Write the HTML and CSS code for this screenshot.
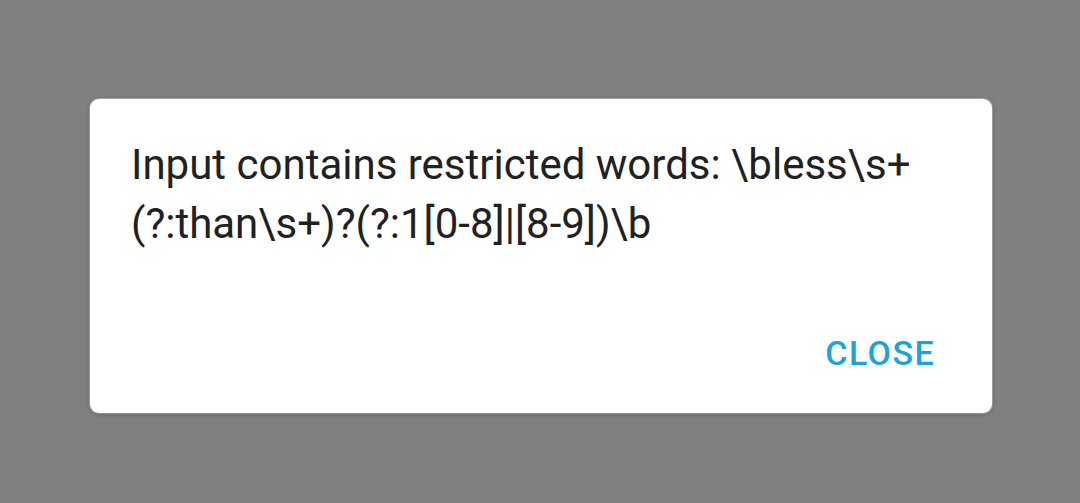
FILE: index.html
```html
<!DOCTYPE html>
<html>
<head>
<meta charset="utf-8">
<link rel="stylesheet" href="styles.css">
</head>
<body>
<div class="page">
  <div class="dialog">
    <p class="message">Input contains restricted words: \bless\s+ (?:than\s+)?(?:1[0-8]|[8-9])\b</p>
    <div class="actions">
      <button class="btn">CLOSE</button>
    </div>
  </div>
</div>
</body>
</html>
```

FILE: styles.css
```css
html, body {
  margin: 0;
  padding: 0;
  height: 100%;
  background: #808080;
  font-family: Roboto, "Noto Sans", sans-serif;
}
.page {
  height: 100%;
  box-sizing: border-box;
  padding: 99px 88px 0 90px;
}
.dialog {
  width: 902px;
  height: 314px;
  box-sizing: border-box;
  background: #ffffff;
  border-radius: 9px;
  box-shadow: 0 1px 5px rgba(0,0,0,0.25), 0 0 0 1px rgba(220,220,220,0.5);
  padding: 36px 40px 0 41px;
  display: flex;
  flex-direction: column;
}
.message {
  margin: 0;
  font-size: 42px;
  line-height: 59px;
  color: #212121;
  flex: 1;
}
.actions {
  display: flex;
  justify-content: flex-end;
  padding: 0 17px 40px 0;
}
.btn {
  background: none;
  border: none;
  padding: 0;
  font-family: Roboto, sans-serif;
  font-weight: 500;
  font-size: 34px;
  color: #1fa3d6;
  letter-spacing: 1.4px;
}
```
